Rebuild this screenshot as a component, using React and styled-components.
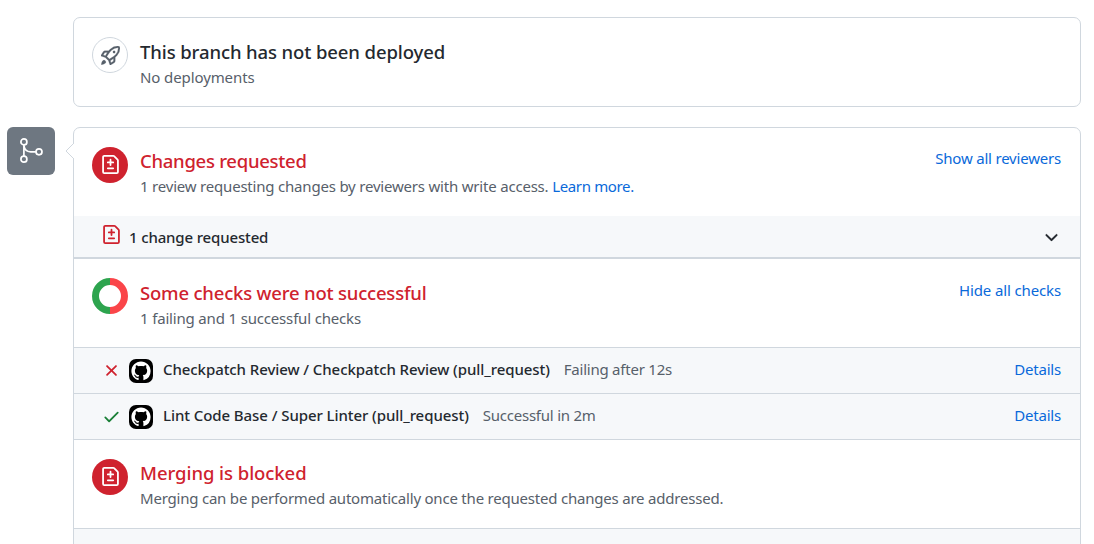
import React from "react";
import styled, { createGlobalStyle } from "styled-components";

const Global = createGlobalStyle`
  * { box-sizing: border-box; }
  body { margin: 0; background: #fff; overflow: hidden; }
`;
const Page = styled.main`
  width: 1094px; height: 544px; overflow: hidden;
  padding: 17px 13px 0 7px;
  font: 15px/22px "Noto Sans", sans-serif;
  color: #24292f;
`;
const Card = styled.section`
  border: 1px solid #d0d7de; border-radius: 7px; background: #fff;
  position: relative;
`;
const DeployCard = styled(Card)`
  margin-left: 66px; height: 90px; padding: 0 18px;
`;
const MergeRow = styled.div`
  display: flex; gap: 18px; margin-top: 20px; align-items: flex-start;
`;
const MergeBadge = styled.div`
  width: 48px; height: 48px; flex: none; border-radius: 6px;
  background: #6e7781; color: #fff;
  display: grid; place-items: center;
`;
const MergeCard = styled(Card)`flex: 1; height: 440px;`;
const Pointer = styled.svg`position: absolute; left: -9px; top: 14px;`;
const Section = styled.div`
  height: ${p => p.$h}px; padding: ${p => p.$pad || "19px 19px 0 18px"};
  display: flex; align-items: flex-start; gap: 12px;
  border-bottom: ${p => p.$line || 0}px solid #d0d7de;
`;
const Round = styled.div`
  width: 36px; height: 36px; flex: none; border-radius: 50%;
  display: grid; place-items: center;
  background: ${p => p.$bg}; color: ${p => p.$fg};
  border: ${p => (p.$ring ? "1px solid #d0d7de" : "0")};
`;
const Copy = styled.div`flex: 1; padding-top: ${p => p.$top || 0}px;`;
const Title = styled.h3`
  margin: 0; font-size: 18.5px; line-height: 28px; font-weight: 550;
  color: ${p => (p.$danger ? "#cf222e" : "#24292f")};
  letter-spacing: ${p => p.$ls || 0}px;
`;
const Text = styled.p`
  margin: 0; color: #57606a; line-height: 23px;
  letter-spacing: ${p => p.$ls ?? -0.2}px;
`;
const Link = styled.a`
  color: #0969da; letter-spacing: ${p => p.$ls ?? -0.2}px;
  padding-top: ${p => p.$top || 0}px;
`;
const Bar = styled.div`
  height: ${p => p.$h}px; background: #f6f8fa; display: flex; align-items: center;
  border-bottom: ${p => p.$line}px solid #d0d7de;
  padding: 0 ${p => p.$right || 19}px ${p => p.$lift || 0}px 28px;
`;
const Strong = styled.span`
  font-weight: 550; white-space: pre;
  letter-spacing: ${p => p.$ls ?? -0.075}px;
  flex: ${p => (p.$grow ? 1 : "none")};
`;
const Muted = styled.span`color: #57606a; margin-left: 14px; flex: 1; letter-spacing: -0.23px;`;
const Avatar = styled.svg`margin: 3px 10px 0 8px; flex: none;`;

const DIFF = "M2.75 1.5a.25.25 0 00-.25.25v12.5c0 .138.112.25.25.25h10.5a.25.25 0 00.25-.25V4.664a.25.25 0 00-.073-.177l-2.914-2.914a.25.25 0 00-.177-.073H2.75zM1 1.75C1 .784 1.784 0 2.75 0h7.586c.464 0 .909.184 1.237.513l2.914 2.914c.329.328.513.773.513 1.237v9.586A1.75 1.75 0 0113.25 16H2.75A1.75 1.75 0 011 14.25V1.75zm7 1.5a.75.75 0 01.75.75v1.5h1.5a.75.75 0 010 1.5h-1.5v1.5a.75.75 0 01-1.5 0V7h-1.5a.75.75 0 010-1.5h1.5V4A.75.75 0 018 3.25zm-3 8a.75.75 0 01.75-.75h4.5a.75.75 0 010 1.5h-4.5a.75.75 0 01-.75-.75z";
const ROCKET = "M14.064 0a8.75 8.75 0 00-6.187 2.563l-.459.458c-.314.314-.616.641-.904.979H3.31a1.75 1.75 0 00-1.49.833L.11 7.607a.75.75 0 00.418 1.11l3.102.954c.037.051.079.1.124.145l2.429 2.428c.046.046.094.088.145.125l.954 3.102a.75.75 0 001.11.418l2.774-1.707a1.75 1.75 0 00.833-1.49V9.485c.338-.288.665-.59.979-.904l.458-.459A8.75 8.75 0 0016 1.936V1.75A1.75 1.75 0 0014.25 0h-.186zM10.5 10.625c-.088.06-.177.118-.266.175l-2.35 1.521.548 1.783 1.949-1.2a.25.25 0 00.119-.213v-2.066zM3.678 8.116L5.2 5.766c.058-.09.117-.178.176-.266H3.309a.25.25 0 00-.213.119l-1.2 1.95 1.782.547zm5.26-4.493A7.25 7.25 0 0114.063 1.5h.186a.25.25 0 01.25.25v.186a7.25 7.25 0 01-2.123 5.127l-.459.458a15.21 15.21 0 01-2.499 2.02l-2.317 1.5-2.143-2.143 1.5-2.317a15.25 15.25 0 012.02-2.5l.458-.458h.002zM12 5a1 1 0 11-2 0 1 1 0 012 0zm-8.44 9.56a1.5 1.5 0 10-2.12-2.12c-.734.73-1.047 2.332-1.15 3.003a.23.23 0 00.265.265c.671-.103 2.273-.416 3.005-1.148z";
const CAT = "M8 0C3.58 0 0 3.58 0 8c0 3.54 2.29 6.53 5.47 7.59.4.07.55-.17.55-.38 0-.19-.01-.82-.01-1.49-2.01.37-2.53-.49-2.69-.94-.09-.23-.48-.94-.82-1.13-.28-.15-.68-.52-.01-.53.63-.01 1.08.58 1.23.82.72 1.21 1.87.87 2.33.66.07-.52.28-.87.51-1.07-1.78-.2-3.64-.89-3.64-3.95 0-.87.31-1.59.82-2.15-.08-.2-.36-1.02.08-2.12 0 0 .67-.21 2.2.82.64-.18 1.32-.27 2-.27.68 0 1.36.09 2 .27 1.53-1.04 2.2-.82 2.2-.82.44 1.1.16 1.92.08 2.12.51.56.82 1.27.82 2.15 0 3.07-1.87 3.75-3.65 3.95.29.25.54.73.54 1.48 0 1.07-.01 1.93-.01 2.2 0 .21.15.46.55.38A8.013 8.013 0 0016 8c0-4.42-3.58-8-8-8z";
const CROSS = "M3.72 3.72a.75.75 0 011.06 0L8 6.94l3.22-3.22a.75.75 0 111.06 1.06L9.06 8l3.22 3.22a.75.75 0 11-1.06 1.06L8 9.06l-3.22 3.22a.75.75 0 01-1.06-1.06L6.94 8 3.72 4.78a.75.75 0 010-1.06z";
const CHECK = "M13.78 4.22a.75.75 0 010 1.06l-7.25 7.25a.75.75 0 01-1.06 0L2.22 9.28a.75.75 0 011.06-1.06L6 10.94l6.72-6.72a.75.75 0 011.06 0z";
const CHEVRON = "M12.78 6.22a.75.75 0 010 1.06l-4.25 4.25a.75.75 0 01-1.06 0L3.22 7.28a.75.75 0 011.06-1.06L8 9.94l3.72-3.72a.75.75 0 011.06 0z";

const Glyph = styled.svg`
  flex: none; fill: ${p => p.$color || "currentColor"};
  stroke: ${p => p.$color || "currentColor"}; stroke-width: ${p => p.$bold || 0};
  margin: ${p => p.$m || 0};
`;
const Icon = ({ d, size, color, m, bold }) => (
  <Glyph viewBox="0 0 16 16" width={size} height={size} $color={color} $m={m} $bold={bold}>
    <path fillRule="evenodd" d={d} />
  </Glyph>
);
const AppAvatar = () => (
  <Avatar width="24" height="24" viewBox="0 0 24 24">
    <rect width="24" height="24" rx="7" fill="#000" />
    <g transform="translate(2.4 2.4) scale(1.2)"><path d={CAT} fill="#fff" /></g>
  </Avatar>
);
const Check = ({ icon, color, name, status }) => (
  <Bar $h={46} $line={1} $lift={3}>
    <Icon d={icon} size={19} color={color} m="2px 0 0" />
    <AppAvatar />
    <Strong>{name}</Strong>
    <Muted>{status}</Muted>
    <Link>Details</Link>
  </Bar>
);

export default function App() {
  return (
    <Page>
      <Global />
      <DeployCard>
        <Section $h={88} $pad="19px 0 0">
          <Round $bg="#fff" $fg="#57606a" $ring><Icon d={ROCKET} size={19} m="1px 0 0 1px" bold={0.2} /></Round>
          <Copy $top={1}>
            <Title $ls={-0.11}>This branch has not been deployed</Title>
            <Text $ls={-0.1}>No deployments</Text>
          </Copy>
        </Section>
      </DeployCard>
      <MergeRow>
        <MergeBadge>
          <svg width="28" height="28" viewBox="0 0 28 28" fill="none" stroke="currentColor" strokeWidth="1.7">
            <circle cx="6.9" cy="4.9" r="3" /><circle cx="6.9" cy="22.2" r="3" /><circle cx="22" cy="14.8" r="3" />
            <path d="M6.9 8v11.1M6.9 8c.4 4.2 3 6.8 6.8 6.8h5.2" />
          </svg>
        </MergeBadge>
        <MergeCard>
          <Pointer width="9" height="18" viewBox="0 0 9 18">
            <path d="M9 1L1 9l8 8" fill="#fff" stroke="#d0d7de" />
          </Pointer>
          <Section $h={88}>
            <Round $bg="#cf222e" $fg="#fff"><Icon d={DIFF} size={19} m="0 0 1px 1px" /></Round>
            <Copy>
              <Title $danger $ls={-0.28}>Changes requested</Title>
              <Text>1 review requesting changes by reviewers with write access. <Link $ls={-0.35}>Learn more.</Link></Text>
            </Copy>
            <Link>Show all reviewers</Link>
          </Section>
          <Bar $h={43} $line={2} $right={19}>
            <Icon d={DIFF} size={19} color="#cf222e" m="0 8px 4px 0" />
            <Strong $grow $ls={-0.15}>1 change requested</Strong>
            <Icon d={CHEVRON} size={19} bold={0.15} />
          </Bar>
          <Section $h={89} $line={1}>
            <svg width="36" height="36" viewBox="0 0 36 36" fill="none" strokeWidth="7">
              <path d="M18 3.5a14.5 14.5 0 000 29" stroke="#2da44e" />
              <path d="M18 3.5a14.5 14.5 0 010 29" stroke="#fa4549" />
            </svg>
            <Copy $top={1}>
              <Title $danger $ls={-0.2}>Some checks were not successful</Title>
              <Text $ls={-0.17}>1 failing and 1 successful checks</Text>
            </Copy>
            <Link $top={1} $ls={-0.13}>Hide all checks</Link>
          </Section>
          <Check icon={CROSS} color="#cf222e" name="Checkpatch Review / Checkpatch Review (pull_request)" status="Failing after 12s" />
          <Check icon={CHECK} color="#1a7f37" name="Lint Code Base / Super Linter (pull_request)" status="Successful in 2m" />
          <Section $h={89} $line={1}>
            <Round $bg="#cf222e" $fg="#fff"><Icon d={DIFF} size={19} m="0 0 1px 1px" /></Round>
            <Copy>
              <Title $danger $ls={-0.06}>Merging is blocked</Title>
              <Text $ls={-0.21}>Merging can be performed automatically once the requested changes are addressed.</Text>
            </Copy>
          </Section>
          <Bar $h={40} $line={0} />
        </MergeCard>
      </MergeRow>
    </Page>
  );
}
